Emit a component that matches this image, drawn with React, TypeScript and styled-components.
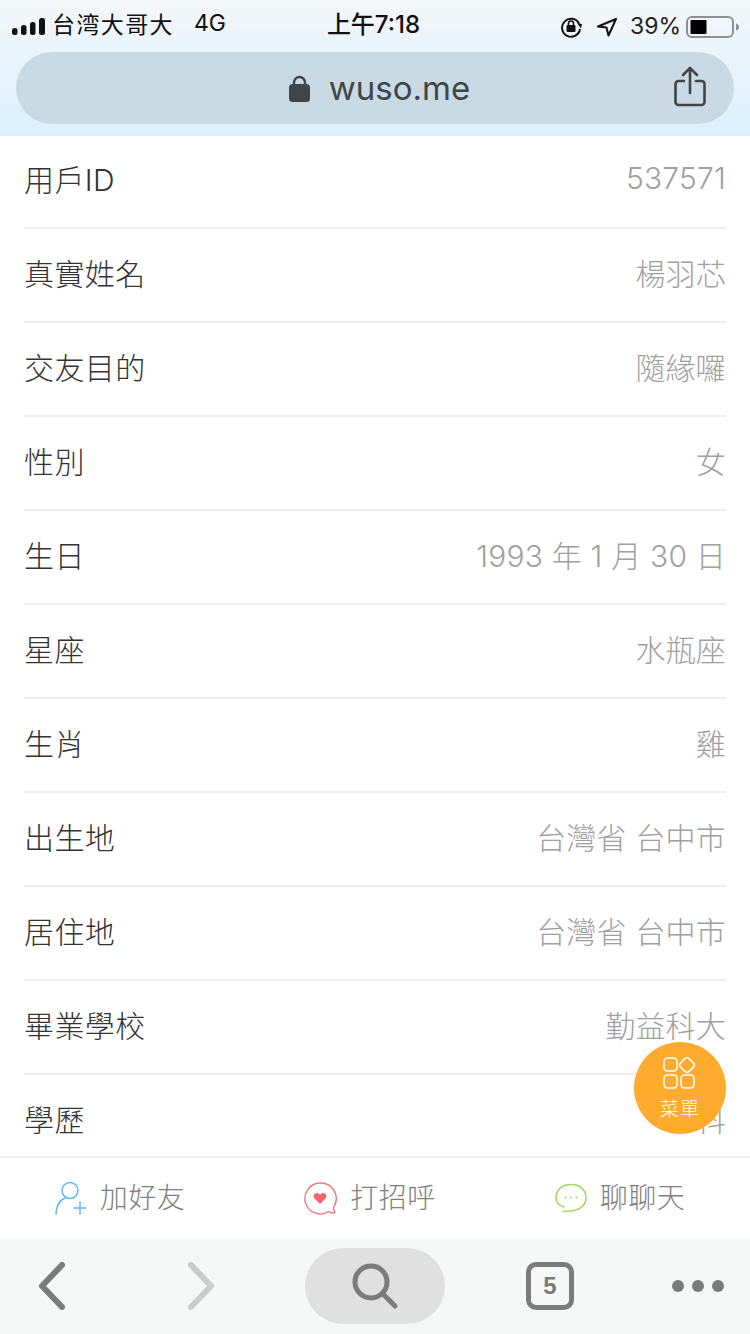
import React from "react";
import styled, { createGlobalStyle } from "styled-components";

const Global = createGlobalStyle`
  html, body { margin: 0; padding: 0; background: #fff; }
  body { font-family: Inter, "Noto Sans CJK TC", sans-serif; }
`;

const Page = styled.div`
  position: relative;
  width: 750px;
  height: 1334px;
  overflow: hidden;
  display: flex;
  flex-direction: column;
  background: #fff;
`;

const BrowserHeader = styled.header`
  height: 136px;
  flex: none;
  box-sizing: border-box;
  padding: 5px 16px 0;
  background: linear-gradient(180deg, #f4f7f9 0%, #dbf0fe 100%);
`;

const StatusBar = styled.div`
  height: 30px;
  display: grid;
  grid-template-columns: 1fr auto 1fr;
  align-items: center;
  margin: 0 -4px 17px;
  color: #111;
  font-size: 22px;
`;

const StatusLeft = styled.div`
  display: flex;
  align-items: center;
  gap: 5px;
`;

const Carrier = styled.span`
  font-size: 23px;
  letter-spacing: 1.4px;
  padding-bottom: 8px;
`;

const Network = styled.span`
  margin-left: 15px;
  font-size: 23px;
  padding-bottom: 8px;
`;

const Clock = styled.div`
  font-size: 24px;
  font-weight: 500;
  margin-left: -3px;
  padding-bottom: 8px;
`;

const StatusRight = styled.div`
  display: flex;
  align-items: center;
  justify-content: flex-end;
  margin-right: -2px;
`;

const Percent = styled.span`
  margin: 0 5px 0 12px;
  font-size: 23px;
  color: #222;
  padding-bottom: 2px;
`;

const AddressBar = styled.div`
  height: 72px;
  border-radius: 36px;
  background: #c9dae4;
  position: relative;
  display: flex;
  align-items: center;
  justify-content: center;
  gap: 19px;
  padding-left: 9px;
  color: #404548;
  font-size: 33px;
  font-weight: 400;
`;

const ShareIcon = styled.svg`
  position: absolute;
  right: 28px;
  top: 14px;
`;

const List = styled.main`
  flex: 1;
  min-height: 0;
  overflow: hidden;
  margin-top: -1px;
  padding: 0 24px;
`;

const Row = styled.div`
  box-sizing: border-box;
  height: 94px;
  padding-bottom: 6px;
  display: flex;
  align-items: center;
  justify-content: space-between;
  border-bottom: 2px solid #eeeeee;
`;

const Label = styled.span`
  font-size: 30px;
  letter-spacing: 0.4px;
  color: #333;
  font-weight: 300;
`;

const Value = styled.span`
  font-size: 30px;
  letter-spacing: 0.2px;
  color: #a0a0a0;
  font-weight: 300;
`;

const ActionBar = styled.nav`
  flex: none;
  border-top: 2px solid #eeeeee;
  height: 80px;
  display: grid;
  grid-template-columns: repeat(3, 1fr);
  background: #fff;
`;

const Action = styled.div`
  display: flex;
  align-items: center;
  justify-content: center;
  gap: 13px;
  padding: 0 10px 0 0;
  font-size: 28px;
  letter-spacing: 0.5px;
  font-weight: 300;
  color: #808080;
  font-family: "Noto Sans CJK TC", sans-serif;
`;

const ActionText = styled.span`
  padding-bottom: 4px;
`;

const BrowserToolbar = styled.footer`
  height: 96px;
  flex: none;
  background: #f6f7f7;
  display: grid;
  grid-template-columns: 104px 194px 147px 210px 86px;
  align-items: center;
`;

const ToolCell = styled.div`
  display: flex;
  align-items: center;
  justify-content: center;
`;

const SearchPill = styled.div`
  width: 140px;
  height: 76px;
  justify-self: end;
  border-radius: 38px;
  background: #e0e0e0;
  display: flex;
  align-items: center;
  justify-content: center;
`;

const TabCount = styled.div`
  box-sizing: border-box;
  width: 48px;
  height: 48px;
  border: 5px solid #7b7b7b;
  border-radius: 10px;
  display: flex;
  align-items: center;
  justify-content: center;
  color: #7b7b7b;
  font: 700 24px "Liberation Sans", sans-serif;
`;

const Dots = styled.div`
  display: flex;
  gap: 8px;
`;

const Dot = styled.span`
  width: 12px;
  height: 12px;
  border-radius: 50%;
  background: #7b7b7b;
`;

const MenuButton = styled.button`
  position: absolute;
  left: 634px;
  top: 1042px;
  width: 92px;
  height: 92px;
  border: 0;
  padding: 15px 0 0;
  border-radius: 50%;
  background: #ffab2e;
  color: #fff;
  display: flex;
  flex-direction: column;
  align-items: center;
  gap: 5px;
  font: 300 19px "Noto Sans CJK TC", sans-serif;
  letter-spacing: 1px;
`;

const rows: [string, string][] = [
  ["用戶ID", "537571"],
  ["真實姓名", "楊羽芯"],
  ["交友目的", "隨緣囉"],
  ["性別", "女"],
  ["生日", "1993 年 1 月 30 日"],
  ["星座", "水瓶座"],
  ["生肖", "雞"],
  ["出生地", "台灣省 台中市"],
  ["居住地", "台灣省 台中市"],
  ["畢業學校", "勤益科大"],
  ["學歷", "本科"],
];

export default function App() {
  return (
    <Page>
      <Global />
      <BrowserHeader>
        <StatusBar>
          <StatusLeft>
            <svg width="35" height="20" viewBox="0 0 35 20" fill="#111">
              <rect x="0" y="11" width="5.500" height="7" rx="2.500" />
              <rect x="9" y="8" width="5.500" height="10" rx="2.500" />
              <rect x="18" y="5" width="5.500" height="13" rx="2.500" />
              <rect x="27" y="1" width="6" height="17" rx="2.500" />
            </svg>
            <Carrier>台湾大哥大</Carrier>
            <Network>4G</Network>
          </StatusLeft>
          <Clock>上午7:18</Clock>
          <StatusRight>
            <svg width="24" height="22" viewBox="0 0 24 22" fill="none">
              <path d="M19 7.500A9 9 0 1 0 20 13" stroke="#111" strokeWidth="2" />
              <path d="M17 7l5 1-1 4.500z" fill="#111" />
              <rect x="6.500" y="9" width="9" height="7" rx="1.200" fill="#111" />
              <path d="M8.500 9V7.500a2.500 2.500 0 0 1 5 0V9" stroke="#111" strokeWidth="1.600" />
            </svg>
            <svg width="22" height="20" viewBox="0 0 22 20" fill="none" style={{ marginLeft: 12 }}>
              <path d="M20 2 2 9.500l8.500 1 2 8z" stroke="#111" strokeWidth="2" strokeLinejoin="round" />
            </svg>
            <Percent>39%</Percent>
            <svg width="54" height="24" viewBox="0 0 54 24">
              <rect x="1" y="2" width="46" height="20" rx="5" fill="none" stroke="#8d8f91" strokeWidth="2" />
              <rect x="4.500" y="5" width="16" height="14" rx="1" fill="#000" />
              <path d="M50 8.500c2 .5 3 2 3 3.500s-1 3-3 3.500z" fill="#8d8f91" />
            </svg>
          </StatusRight>
        </StatusBar>
        <AddressBar>
          <svg width="21" height="27" viewBox="0 0 21 27">
            <path d="M5 12V7.500a5.500 5.500 0 0 1 11 0V12" fill="none" stroke="#404548" strokeWidth="2.400" />
            <rect x="0" y="9" width="21" height="18" rx="3.500" fill="#404548" />
          </svg>
          wuso.me
          <ShareIcon width="32" height="42" viewBox="0 0 32 42" fill="none" stroke="#404548" strokeWidth="2.600" strokeLinecap="round" strokeLinejoin="round">
            <path d="M16 27V3M9 9l7-7 7 7" />
            <path d="M10 15H4.500A3 3 0 0 0 1.500 18v18a3 3 0 0 0 3 3h23a3 3 0 0 0 3-3V18a3 3 0 0 0-3-3H22" />
          </ShareIcon>
        </AddressBar>
      </BrowserHeader>
      <List>
        {rows.map(([k, v]) => (
          <Row key={k}>
            <Label>{k}</Label>
            <Value>{v}</Value>
          </Row>
        ))}
      </List>
      <ActionBar>
        <Action>
          <svg width="32" height="34" viewBox="0 0 32 34" fill="none" stroke="#5fb6ee" strokeWidth="1.500" strokeLinecap="round">
            <circle cx="15" cy="9.500" r="8" />
            <path d="M1 33c0-8 4-14 9-16M19 27h12M25 21v12" />
          </svg>
          <ActionText>加好友</ActionText>
        </Action>
        <Action>
          <svg width="33" height="33" viewBox="0 0 33 33" fill="none">
            <path d="M16.500 1a15.500 15.500 0 1 0 8 28.700c2.500 1.500 4.800 1.500 6.500 1-1-1.500-1.500-3.500-1.500-5.500A15.500 15.500 0 0 0 16.500 1z" stroke="#f4747d" strokeWidth="1.400" />
            <path d="M16 22l-5.500-5.500c-3-3.500 2.500-8 5.500-3.500 3-4.500 8.500 0 5.500 3.500z" fill="#f4666f" />
          </svg>
          <ActionText>打招呼</ActionText>
        </Action>
        <Action>
          <svg width="32" height="30" viewBox="0 0 32 30" fill="none">
            <path d="M8 28.500c8 0 23-1 23-14C31 6 24 1.500 16 1.500S1 6 1 14.500c0 4.500 3 8 8 9.500" stroke="#9bd95f" strokeWidth="1.500" strokeLinecap="round" />
            <circle cx="10.500" cy="14.500" r="1" fill="#9bd95f" />
            <circle cx="16" cy="14.500" r="1" fill="#9bd95f" />
            <circle cx="21.500" cy="14.500" r="1" fill="#9bd95f" />
          </svg>
          <ActionText>聊聊天</ActionText>
        </Action>
      </ActionBar>
      <BrowserToolbar>
        <ToolCell>
          <svg width="28" height="48" viewBox="0 0 28 48" fill="none" stroke="#7b7b7b" strokeWidth="6" strokeLinecap="round" strokeLinejoin="round">
            <path d="M24 3 4 24l20 21" />
          </svg>
        </ToolCell>
        <ToolCell>
          <svg width="28" height="48" viewBox="0 0 28 48" fill="none" stroke="#cccccc" strokeWidth="6" strokeLinecap="round" strokeLinejoin="round">
            <path d="M4 3l20 21L4 45" />
          </svg>
        </ToolCell>
        <SearchPill>
          <svg width="46" height="46" viewBox="0 0 46 46" fill="none" stroke="#7b7b7b" strokeWidth="5" strokeLinecap="round">
            <circle cx="19" cy="19" r="16" />
            <path d="M31 31l12 12" />
          </svg>
        </SearchPill>
        <ToolCell>
          <TabCount>5</TabCount>
        </ToolCell>
        <ToolCell>
          <Dots>
            <Dot />
            <Dot />
            <Dot />
          </Dots>
        </ToolCell>
      </BrowserToolbar>
      <MenuButton>
        <svg width="34" height="32" viewBox="0 0 34 32" fill="none" stroke="#fff" strokeWidth="1.500">
          <rect x="1" y="1" width="13" height="13" rx="3.500" />
          <rect x="18" y="2" width="12" height="12" rx="3" transform="rotate(45 24 8)" />
          <rect x="1" y="18" width="13" height="13" rx="3.500" />
          <rect x="18" y="18" width="13" height="13" rx="3.500" />
        </svg>
        菜單
      </MenuButton>
    </Page>
  );
}
